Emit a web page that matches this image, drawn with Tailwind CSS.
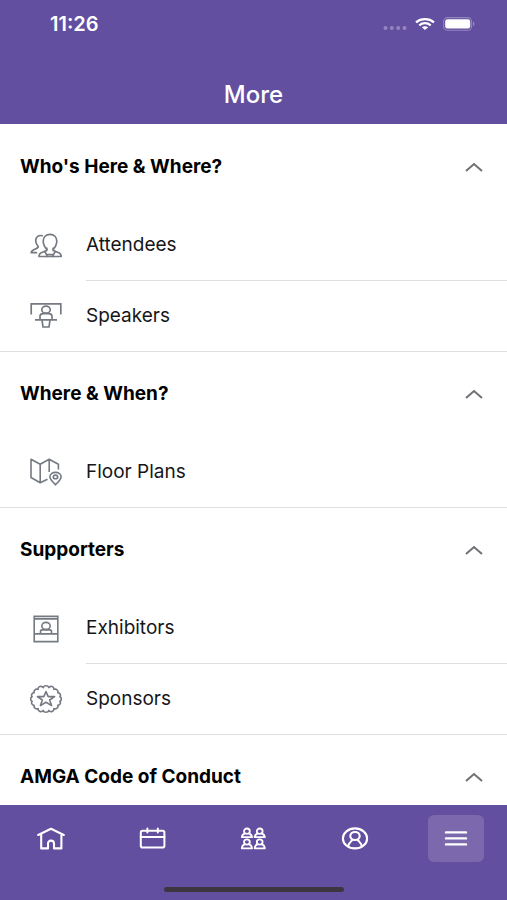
<!DOCTYPE html>
<html lang="en">
<head>
<meta charset="utf-8">
<meta name="viewport" content="width=device-width, initial-scale=1">
<title>More</title>
<script src="https://cdn.jsdelivr.net/npm/@tailwindcss/browser@4"></script>
</head>
<body class="flex h-screen flex-col overflow-hidden bg-white font-[Inter,'Liberation_Sans',sans-serif] text-black">

<header class="shrink-0 bg-[#634f9f] text-white">
  <div class="flex h-12 items-center justify-between pr-8 pl-[50px]">
    <time class="text-[20px] font-semibold">11:26</time>
    <div class="flex items-center gap-2">
      <svg class="mt-2 h-1 w-6" viewBox="0 0 24 4" fill="#9485c0" aria-hidden="true"><circle cx="2.5" cy="2" r="2"/><circle cx="8.8" cy="2" r="2"/><circle cx="15.2" cy="2" r="2"/><circle cx="21.5" cy="2" r="2"/></svg>
      <svg class="h-3 w-5" viewBox="0 0 20 12" fill="none" stroke="#fff" stroke-width="2.2" aria-hidden="true"><path d="M1 4.3C6 .1 14 .1 19 4.3"/><path d="M4.3 7.3C7.6 4.5 12.4 4.5 15.7 7.3"/><path d="M10 12 6.8 9.3C8.6 7.9 11.4 7.9 13.2 9.3Z" fill="#fff" stroke="none"/></svg>
      <svg class="h-[14px] w-8" viewBox="0 0 32 14" aria-hidden="true"><rect x=".6" y=".6" width="28" height="12.6" rx="4" fill="none" stroke="#9485c0" stroke-width="1.1"/><rect x="2.2" y="2.2" width="25" height="9.4" rx="2.4" fill="#fff"/><path d="M30 4.8c2 .5 2 3.7 0 4.2Z" fill="#9485c0"/></svg>
    </div>
  </div>
  <h1 class="flex h-[76px] items-center justify-center pt-[18px] text-[24px] font-medium">More</h1>
</header>

<main class="min-h-0 flex-1 overflow-hidden pt-px">
  <section class="border-b border-[#dfdfe2]">
    <h2><button class="flex h-[85px] w-full items-center justify-between pr-[23px] pl-5 text-left text-[19px] font-bold" aria-expanded="true">Who's Here &amp; Where?
      <svg class="h-3 w-5" viewBox="0 0 20 12" fill="none" stroke="#707075" stroke-width="2" aria-hidden="true"><path d="M2 9 10 2 18 9"/></svg></button></h2>
    <ul>
      <li><a href="#attendees" class="flex h-[71px] items-center pl-[30px]">
        <svg class="h-8 w-8 shrink-0" viewBox="0 0 32 32" fill="none" stroke="#757a82" stroke-width="1.7" stroke-linejoin="round" stroke-linecap="round" aria-hidden="true"><path d="M16.8 19.5C14.8 17 13.2 15 13.2 11.2C13.2 7.2 15.9 4.3 20 4.3S26.8 7.2 26.8 11.2C26.8 15 25.2 17 23.2 19.5"/><path d="M16.8 18.2V20.5L11.2 22.7C9.5 23.5 9 24.2 9 26.5H31.2C31.2 24.2 30.5 23.5 28.8 22.7L23.2 20.5V18.2"/><path d="M14.8 21.5 16.5 24.6H23.5L25.2 21.5M17 24.6V26.5M23 24.6V26.5"/><path d="M12.2 5.7C8.7 4.8 5.7 6.9 5.7 10.7C5.7 13.7 7.3 15 8.2 16.5C8.6 19.3 1.2 18.8 1.2 22.7H6.5"/></svg>
        <span class="ml-6 flex flex-1 items-center self-stretch border-b border-[#dfdfe2] text-[19px] text-[#161618]">Attendees</span></a></li>
      <li><a href="#speakers" class="flex h-[70px] items-center pl-[30px]">
        <svg class="h-8 w-8 shrink-0" viewBox="0 0 32 32" fill="none" stroke="#757a82" stroke-width="1.7" aria-hidden="true"><path d="M1.2 14.5V3.9H30.8V14.5"/><ellipse cx="16" cy="9.7" rx="4.2" ry="3.5"/><path d="M10 19V16.3C10 14.3 11.5 13.7 13.5 13.7H18.5C20.5 13.7 22 14.3 22 16.3V19M5 19.8H27M12 19.8 13 27H19L20 19.8"/></svg>
        <span class="ml-6 flex-1 text-[19px] text-[#161618]">Speakers</span></a></li>
    </ul>
  </section>

  <section class="border-b border-[#dfdfe2]">
    <h2><button class="flex h-[85px] w-full items-center justify-between pr-[23px] pl-5 text-left text-[19px] font-bold" aria-expanded="true">Where &amp; When?
      <svg class="h-3 w-5" viewBox="0 0 20 12" fill="none" stroke="#707075" stroke-width="2" aria-hidden="true"><path d="M2 9 10 2 18 9"/></svg></button></h2>
    <ul>
      <li><a href="#floor-plans" class="flex h-[70px] items-center pl-[30px]">
        <svg class="h-8 w-8 shrink-0" viewBox="0 0 32 32" fill="none" stroke="#757a82" stroke-width="1.6" stroke-linejoin="round" aria-hidden="true"><path d="M17.5 23.2 10.2 26.7 1 21.5V3.3L10.2 8.3 19.2 3.3 28.4 8.3V13.5M10.2 8.3V26.7M19.2 3.3V16"/><path d="M25.5 28.8C22.5 25.4 19.9 23.8 19.9 20.8C19.9 18.1 22.4 16.4 25.5 16.4S31.1 18.1 31.1 20.8C31.1 23.8 28.5 25.4 25.5 28.8Z"/><ellipse cx="25.5" cy="20.9" rx="2.2" ry="1.8"/></svg>
        <span class="ml-6 flex-1 text-[19px] text-[#161618]">Floor Plans</span></a></li>
    </ul>
  </section>

  <section class="border-b border-[#dfdfe2]">
    <h2><button class="flex h-[85px] w-full items-center justify-between pr-[23px] pl-5 text-left text-[19px] font-bold" aria-expanded="true">Supporters
      <svg class="h-3 w-5" viewBox="0 0 20 12" fill="none" stroke="#707075" stroke-width="2" aria-hidden="true"><path d="M2 9 10 2 18 9"/></svg></button></h2>
    <ul>
      <li><a href="#exhibitors" class="flex h-[71px] items-center pl-[30px]">
        <svg class="h-8 w-8 shrink-0" viewBox="0 0 32 32" fill="none" stroke="#757a82" stroke-width="1.6" aria-hidden="true"><path d="M4.2 3.4H27.8V28.6H4.2ZM4.2 5.9H27.8M4.2 20.9H27.8"/><ellipse cx="16" cy="12.9" rx="4.2" ry="3.5"/><path d="M10.5 20.7V18.5C10.5 17.5 11.3 16.9 12.5 16.9H19.5C20.7 16.9 21.5 17.5 21.5 18.5V20.7"/></svg>
        <span class="ml-6 flex flex-1 items-center self-stretch border-b border-[#dfdfe2] text-[19px] text-[#161618]">Exhibitors</span></a></li>
      <li><a href="#sponsors" class="flex h-[70px] items-center pl-[30px]">
        <svg class="h-8 w-8 shrink-0" viewBox="0 0 32 32" fill="none" stroke="#757a82" stroke-width="1.6" stroke-linejoin="round" aria-hidden="true"><path d="M29.9 18.3A2.8 2.6 0 0 1 27.8 22.4A2.8 2.6 0 0 1 23.9 25.6A2.8 2.6 0 0 1 18.8 27.4A2.9 2.6 0 0 1 13.2 27.4A2.8 2.6 0 0 1 8.1 25.6A2.8 2.6 0 0 1 4.2 22.4A2.8 2.6 0 0 1 2.1 18.3A2.8 2.6 0 0 1 2.1 13.7A2.8 2.6 0 0 1 4.2 9.6A2.8 2.6 0 0 1 8.1 6.4A2.8 2.6 0 0 1 13.2 4.6A2.9 2.6 0 0 1 18.8 4.6A2.8 2.6 0 0 1 23.9 6.4A2.8 2.6 0 0 1 27.8 9.6A2.8 2.6 0 0 1 29.9 13.7A2.8 2.6 0 0 1 29.9 18.3Z"/><path d="M16 8.6 18.2 13.6H24.6L19.6 17 21.6 22.6 16 19.3 10.4 22.6 12.4 17 7.4 13.6H13.8Z"/></svg>
        <span class="ml-6 flex-1 text-[19px] text-[#161618]">Sponsors</span></a></li>
    </ul>
  </section>

  <section>
    <h2><button class="flex h-[85px] w-full items-center justify-between pr-[23px] pl-5 text-left text-[19px] font-bold" aria-expanded="true">AMGA Code of Conduct
      <svg class="h-3 w-5" viewBox="0 0 20 12" fill="none" stroke="#707075" stroke-width="2" aria-hidden="true"><path d="M2 9 10 2 18 9"/></svg></button></h2>
  </section>
</main>

<nav class="flex shrink-0 flex-col items-center bg-[#634f9f] pt-[10px] pb-2" aria-label="Main">
  <div class="grid w-full grid-cols-5 justify-items-center">
    <a href="#home" aria-label="Home" class="flex h-[47px] w-14 items-center justify-center rounded-md">
      <svg class="h-6 w-7" viewBox="0 0 28 24" fill="none" stroke="#fff" stroke-width="2.1" stroke-linejoin="round" stroke-linecap="round" aria-hidden="true"><path d="M1.2 8 14 1.8 26.8 8M4.2 6.8V21.4H11V16.6C11 14.8 12.2 13.6 14 13.6S17 14.8 17 16.6V21.4H24.4V6.8"/></svg></a>
    <a href="#schedule" aria-label="Schedule" class="flex h-[47px] w-14 items-center justify-center rounded-md">
      <svg class="h-6 w-7" viewBox="0 0 28 24" fill="none" stroke="#fff" stroke-width="2" stroke-linecap="round" aria-hidden="true"><rect x="2.8" y="3.8" width="23.6" height="16.8" rx="1.8"/><path d="M2.8 9.9H26.4M9.4 1.6V5.6M19.8 1.6V5.6"/></svg></a>
    <a href="#attendees" aria-label="Attendees" class="flex h-[47px] w-14 items-center justify-center rounded-md">
      <svg class="h-6 w-7" viewBox="0 0 28 24" fill="none" stroke="#fff" stroke-width="1.8" stroke-linejoin="round" aria-hidden="true"><ellipse cx="7.9" cy="4.2" rx="2.9" ry="2.7"/><path d="M6 6.4C4 7.1 3 8.1 2.8 10.2H13C12.8 8.1 11.8 7.1 9.8 6.4"/><ellipse cx="20.7" cy="4.2" rx="2.9" ry="2.7"/><path d="M18.8 6.4C16.8 7.1 15.8 8.1 15.6 10.2H25.8C25.6 8.1 24.6 7.1 22.6 6.4"/><ellipse cx="7.9" cy="15" rx="2.9" ry="2.7"/><path d="M6 17.2C4 17.9 3 19.2 2.8 21.4H13C12.8 19.2 11.8 17.9 9.8 17.2"/><ellipse cx="20.7" cy="15" rx="2.9" ry="2.7"/><path d="M18.8 17.2C16.8 17.9 15.8 19.2 15.6 21.4H25.8C25.6 19.2 24.6 17.9 22.6 17.2"/></svg></a>
    <a href="#profile" aria-label="Profile" class="flex h-[47px] w-14 items-center justify-center rounded-md">
      <svg class="h-6 w-7" viewBox="0 0 28 24" fill="none" stroke="#fff" stroke-width="2.1" aria-hidden="true"><ellipse cx="14" cy="11.4" rx="12.1" ry="10"/><ellipse cx="14" cy="9" rx="4.7" ry="4"/><path d="M6.8 19.4C8 15.6 10.4 14.4 11.6 12.4M21.2 19.4C20 15.6 17.6 14.4 16.4 12.4"/></svg></a>
    <a href="#more" aria-label="More" aria-current="page" class="flex h-[47px] w-14 items-center justify-center rounded-md bg-[#7b68ad]">
      <svg class="h-6 w-7" viewBox="0 0 28 24" fill="none" stroke="#fff" stroke-width="2.4" stroke-linecap="round" aria-hidden="true"><path d="M4 5.4H24M4 11.4H24M4 17.4H24"/></svg></a>
  </div>
  <div class="mt-[25px] h-[5px] w-[180px] rounded-full bg-[#3b363f]"></div>
</nav>
</body>
</html>
